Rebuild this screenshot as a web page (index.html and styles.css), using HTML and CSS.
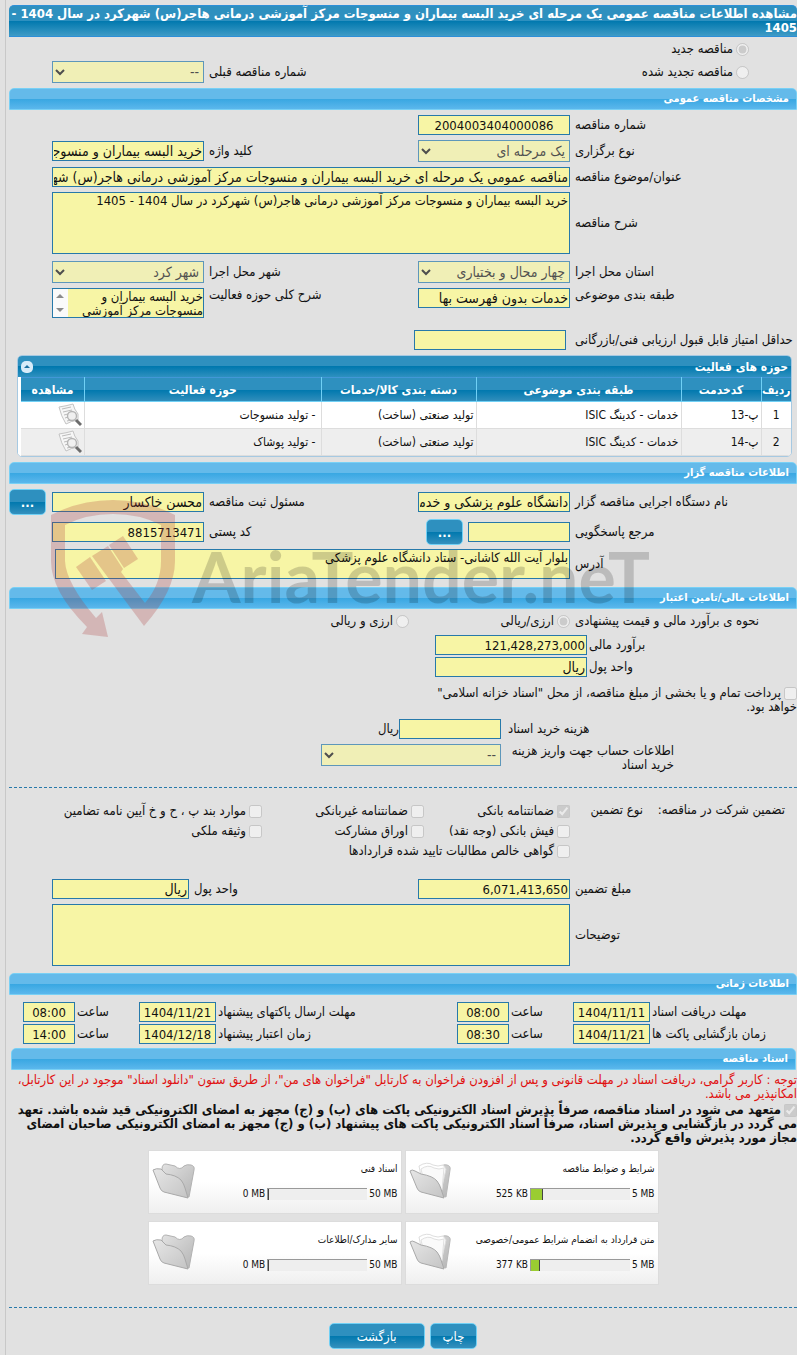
FILE: index.html
```html
<!DOCTYPE html>
<html lang="fa" dir="rtl">
<head>
<meta charset="UTF-8">
<meta name="viewport" content="width=device-width, initial-scale=1.0">
<title>مشاهده اطلاعات مناقصه عمومی</title>
<link rel="stylesheet" href="styles.css">
</head>
<body>

<!-- shared icons -->
<svg class="sprite" aria-hidden="true">
    <defs>
        <linearGradient id="folderBack" x1="0" y1="0" x2="1" y2="1">
            <stop offset="0" stop-color="#e2e2e2"/>
            <stop offset="1" stop-color="#b4b4b4"/>
        </linearGradient>
        <linearGradient id="folderFront" x1="0" y1="0" x2="1" y2="1">
            <stop offset="0" stop-color="#e6e6e6"/>
            <stop offset="1" stop-color="#c4c4c4"/>
        </linearGradient>
    </defs>
    <symbol id="folder-empty" viewBox="0 0 44 38">
        <path d="M10 7 Q10 2 14 2 L23 4 Q28 9 32 4 Q35 2 39 3 Q43 4 42 8 L37 35 L14 28 Z" fill="url(#folderBack)" stroke="#b2b2b2"/>
        <path d="M1 8 Q4 6 9 7 L14 12 Q24 13 29 18 Q32 22 33 26 L36 36 L12 30 Q9 29 8 26 Z" fill="url(#folderFront)" stroke="#a9a9a9"/>
    </symbol>
    <symbol id="folder-full" viewBox="0 0 44 38">
        <path d="M20 5 Q28 8 33 4 Q35 2 38 3 Q42 4 41 8 L37 35 L14 28 Z" fill="url(#folderBack)" stroke="#b8b8b8"/>
        <path d="M10 4 Q18 -1 24 3 Q29 5 34 3 L37 7 L32 29 L14 24 Z" fill="#fff" stroke="#dedede"/>
        <path d="M12 7 Q19 2 25 6 Q30 8 35 6 L33 28 L16 24 Z" fill="#fafafa" stroke="#e0e0e0"/>
        <path d="M1 9 Q3 7 6 9 L12 12 Q24 14 28 19 Q31 23 32 27 L35 36 L12 30 Q9 29 8 26 Z" fill="url(#folderFront)" stroke="#a9a9a9"/>
    </symbol>
    <symbol id="view" viewBox="0 0 24 24">
        <path d="M1 4 Q8 3 15 1 Q16 6 20 11 L20 17 Q13 18 8 21 Q3 13 1 4 Z" fill="#f6f6f6" stroke="#c4c4c4"/>
        <path d="M4 6 L13 4 M5 9 L14 7 M6 12 L10 11 M7 15 L10 14 M9 18 L13 17" stroke="#bbb" fill="none"/>
        <circle cx="14" cy="13" r="4.5" fill="#f0f0f0" stroke="#b4b4b4" stroke-width="1.4"/>
        <path d="M18 17 L23 22" stroke="#6c6c6c" stroke-width="3"/>
    </symbol>
</svg>

<div class="page">

    <h1 class="title">مشاهده اطلاعات مناقصه عمومی یک مرحله ای خرید البسه بیماران و منسوجات مرکز آموزشی درمانی هاجر(س) شهرکرد در سال 1404 - 1405</h1>

    <div class="kind">
        <div class="kind-line"><input type="radio" name="kind" id="kindNew" checked disabled><label for="kindNew">مناقصه جدید</label></div>
        <div class="form-row">
            <div class="kind-line"><input type="radio" name="kind" id="kindRenew" disabled><label for="kindRenew">مناقصه تجدید شده</label></div>
            <span></span>
            <label class="lbl" for="prevNo">شماره مناقصه قبلی</label>
            <select id="prevNo" disabled><option>--</option></select>
        </div>
    </div>

    <h2 class="bar">مشخصات مناقصه عمومی</h2>
    <div class="section">
        <div class="form-row">
            <label class="lbl" for="tenderNo">شماره مناقصه</label>
            <input class="num center" type="text" id="tenderNo" value="2004003404000086" readonly>
        </div>
        <div class="form-row">
            <label class="lbl" for="tenderType">نوع برگزاری</label>
            <select id="tenderType" disabled><option>یک مرحله ای</option></select>
            <label class="lbl" for="keyword">کلید واژه</label>
            <input type="text" id="keyword" value="خرید البسه بیماران و منسوجات" readonly>
        </div>
        <div class="form-row">
            <label class="lbl" for="subject">عنوان/موضوع مناقصه</label>
            <input class="wide" type="text" id="subject" value="مناقصه عمومی یک مرحله ای خرید البسه بیماران و منسوجات مرکز آموزشی درمانی هاجر(س) شهرکرد" readonly>
        </div>
        <div class="form-row after-area">
            <label class="lbl" for="desc">شرح مناقصه</label>
            <textarea class="wide tall" id="desc" readonly>خرید البسه بیماران و منسوجات مرکز آموزشی درمانی هاجر(س) شهرکرد در سال 1404 - 1405</textarea>
        </div>
        <div class="form-row">
            <label class="lbl" for="province">استان محل اجرا</label>
            <select id="province" disabled><option>چهار محال و بختیاری</option></select>
            <label class="lbl" for="city">شهر محل اجرا</label>
            <select id="city" disabled><option>شهر کرد</option></select>
        </div>
        <div class="form-row top">
            <label class="lbl" for="category">طبقه بندی موضوعی</label>
            <input type="text" id="category" value="خدمات بدون فهرست بها" readonly>
            <label class="lbl" for="scope">شرح کلی حوزه فعالیت</label>
            <div class="scroll-area">
                <textarea id="scope" readonly>خرید البسه بیماران و منسوجات مرکز آموزشی درمانی هاجر(س) شهرکرد</textarea>
                <svg viewBox="0 0 15 28" aria-hidden="true"><path d="M3 9 L7 5 L11 9 Z M3 19 L7 23 L11 19 Z" fill="#8b8b8b"/></svg>
            </div>
        </div>
        <div class="form-row score">
            <label class="lbl" for="minScore">حداقل امتیاز قابل قبول ارزیابی فنی/بازرگانی</label>
            <input type="text" id="minScore" readonly>
        </div>
        <div class="grid-box">
            <div class="grid-caption">
                <span>حوزه های فعالیت</span>
                <button class="toggle" type="button" aria-label="بستن">
                    <svg viewBox="0 0 12 12"><path d="M3 7 L6 4 L9 7 Z" fill="#1c6f9f"/></svg>
                </button>
            </div>
            <table class="grid">
                <colgroup>
                    <col class="c-row"><col class="c-code"><col class="c-subj"><col class="c-cat"><col><col class="c-view">
                </colgroup>
                <thead>
                    <tr>
                        <th>ردیف</th>
                        <th>کدخدمت</th>
                        <th>طبقه بندی موضوعی</th>
                        <th>دسته بندی کالا/خدمات</th>
                        <th>حوزه فعالیت</th>
                        <th>مشاهده</th>
                    </tr>
                </thead>
                <tbody>
                    <tr>
                        <td class="center">1</td>
                        <td>پ-13</td>
                        <td>خدمات - کدینگ ISIC</td>
                        <td>تولید صنعتی (ساخت)</td>
                        <td class="act">- تولید منسوجات</td>
                        <td><svg class="view"><use href="#view"/></svg></td>
                    </tr>
                    <tr>
                        <td class="center">2</td>
                        <td>پ-14</td>
                        <td>خدمات - کدینگ ISIC</td>
                        <td>تولید صنعتی (ساخت)</td>
                        <td class="act">- تولید پوشاک</td>
                        <td><svg class="view"><use href="#view"/></svg></td>
                    </tr>
                </tbody>
            </table>
        </div>
    </div>

    <h2 class="bar">اطلاعات مناقصه گزار</h2>
    <div class="section owner">
        <div class="form-row with-btn">
            <label class="lbl" for="org">نام دستگاه اجرایی مناقصه گزار</label>
            <input type="text" id="org" value="دانشگاه علوم پزشکی و خدمات بهداشتی" readonly>
            <label class="lbl" for="officer">مسئول ثبت مناقصه</label>
            <input type="text" id="officer" value="محسن خاکسار" readonly>
            <button class="btn dots" type="button">...</button>
        </div>
        <div class="form-row">
            <label class="lbl" for="contact">مرجع پاسخگویی</label>
            <div class="pair">
                <input type="text" id="contact" readonly>
                <button class="btn dots" type="button">...</button>
            </div>
            <label class="lbl" for="postal">کد پستی</label>
            <input class="num" type="text" id="postal" value="8815713471" readonly>
        </div>
        <div class="form-row address">
            <label class="lbl" for="address">آدرس</label>
            <textarea class="wide" id="address" readonly>بلوار آیت الله کاشانی- ستاد دانشگاه علوم پزشکی</textarea>
        </div>

        <div class="watermark">
            <svg viewBox="0 0 128 138" aria-hidden="true">
                <g fill="#ad3636" fill-opacity="0.25">
                    <path d="M1 16 Q30 1 63 1 Q96 1 125 16 L125 62 Q125 92 94 127 L42 57 L58 47 L73 70 L71 73 L95 104 Q111 85 111 62 L111 26 Q90 15 63 15 Q36 15 15 26 L15 62 Q16 84 46 119 L52 113 L58 138 L32 135 L37 128 Q1 92 1 62 Z"/>
                    <path d="M26 68 L40 58 L56 82 L42 91 Z"/>
                    <path d="M59 46 L73 37 L88 60 L74 69 Z"/>
                </g>
            </svg>
            <span>AriaTender.neT</span>
        </div>
    </div>

    <h2 class="bar">اطلاعات مالی/تامین اعتبار</h2>
    <div class="section money">
        <div class="form-row">
            <span class="lbl">نحوه ی برآورد مالی و قیمت پیشنهادی</span>
            <div class="radios wide">
                <span><input type="radio" name="currency" id="curOne" checked disabled><label for="curOne">ارزی/ریالی</label></span>
                <span><input type="radio" name="currency" id="curBoth" disabled><label for="curBoth">ارزی و ریالی</label></span>
            </div>
        </div>
        <div class="amount-row">
            <label class="lbl" for="estimate">برآورد مالی</label>
            <input class="num" type="text" id="estimate" value="121,428,273,000" readonly>
            <label class="lbl" for="unit1">واحد پول</label>
            <input type="text" id="unit1" value="ریال" readonly>
        </div>
        <div class="treasury"><input type="checkbox" id="treasury" disabled><label for="treasury">پرداخت تمام و یا بخشی از مبلغ مناقصه، از محل "اسناد خزانه اسلامی" خواهد بود.</label></div>
        <div class="fee-row">
            <label class="lbl" for="fee">هزینه خرید اسناد</label>
            <div class="fee"><input type="text" id="fee" readonly><span>ریال</span></div>
            <label class="lbl narrow" for="account">اطلاعات حساب جهت واریز هزینه خرید اسناد</label>
            <select id="account" disabled><option>--</option></select>
        </div>
        <hr>
        <div class="guarantee">
            <span class="g-title">تضمین شرکت در مناقصه:</span>
            <span class="g-type">نوع تضمین</span>
            <div class="checks">
                <span><input type="checkbox" id="g1" checked disabled><label for="g1">ضمانتنامه بانکی</label></span>
                <span><input type="checkbox" id="g2" disabled><label for="g2">ضمانتنامه غیربانکی</label></span>
                <span><input type="checkbox" id="g3" disabled><label for="g3">موارد بند پ ، ح و خ آیین نامه تضامین</label></span>
                <span><input type="checkbox" id="g4" disabled><label for="g4">فیش بانکی (وجه نقد)</label></span>
                <span><input type="checkbox" id="g5" disabled><label for="g5">اوراق مشارکت</label></span>
                <span><input type="checkbox" id="g6" disabled><label for="g6">وثیقه ملکی</label></span>
                <span class="full"><input type="checkbox" id="g7" disabled><label for="g7">گواهی خالص مطالبات تایید شده قراردادها</label></span>
            </div>
        </div>
        <div class="form-row unit">
            <label class="lbl" for="gAmount">مبلغ تضمین</label>
            <input class="num" type="text" id="gAmount" value="6,071,413,650" readonly>
            <label class="lbl" for="unit2">واحد پول</label>
            <input type="text" id="unit2" value="ریال" readonly>
        </div>
        <div class="form-row after-area">
            <label class="lbl" for="notes">توضیحات</label>
            <textarea class="wide tall" id="notes" readonly></textarea>
        </div>
    </div>

    <h2 class="bar">اطلاعات زمانی</h2>
    <div class="times">
        <label class="lbl" for="d1">مهلت دریافت اسناد</label>
        <input class="num" type="text" id="d1" value="1404/11/11" readonly>
        <label class="lbl" for="t1">ساعت</label>
        <input class="num" type="text" id="t1" value="08:00" readonly>
        <label class="lbl" for="d2">مهلت ارسال پاکتهای پیشنهاد</label>
        <input class="num" type="text" id="d2" value="1404/11/21" readonly>
        <label class="lbl" for="t2">ساعت</label>
        <input class="num" type="text" id="t2" value="08:00" readonly>
        <label class="lbl" for="d3">زمان بازگشایی پاکت ها</label>
        <input class="num" type="text" id="d3" value="1404/11/21" readonly>
        <label class="lbl" for="t3">ساعت</label>
        <input class="num" type="text" id="t3" value="08:30" readonly>
        <label class="lbl" for="d4">زمان اعتبار پیشنهاد</label>
        <input class="num" type="text" id="d4" value="1404/12/18" readonly>
        <label class="lbl" for="t4">ساعت</label>
        <input class="num" type="text" id="t4" value="14:00" readonly>
    </div>

    <h2 class="bar inset">اسناد مناقصه</h2>
    <p class="warning">توجه : کاربر گرامی، دریافت اسناد در مهلت قانونی و پس از افزودن فراخوان به کارتابل "فراخوان های من"، از طریق ستون "دانلود اسناد" موجود در این کارتابل، امکانپذیر می باشد.</p>
    <div class="commit"><input type="checkbox" id="commit" checked disabled><label for="commit">متعهد می شود در اسناد مناقصه، صرفاً پذیرش اسناد الکترونیکی پاکت های (ب) و (ج) مجهز به امضای الکترونیکی قید شده باشد. تعهد می گردد در بازگشایی و پذیرش اسناد، صرفاً اسناد الکترونیکی پاکت های پیشنهاد (ب) و (ج) مجهز به امضای الکترونیکی صاحبان امضای مجاز مورد پذیرش واقع گردد.</label></div>

    <div class="docs">
        <div class="doc">
            <div class="doc-info">
                <div>شرایط و ضوابط مناقصه</div>
                <div class="usage"><span>525 KB</span><div class="track"><div class="fill" style="width: 12%"></div></div><span>5 MB</span></div>
            </div>
            <svg class="folder"><use href="#folder-full"/></svg>
        </div>
        <div class="doc">
            <div class="doc-info">
                <div>اسناد فنی</div>
                <div class="usage"><span>0 MB</span><div class="track"><div class="fill" style="width: 0%"></div></div><span>50 MB</span></div>
            </div>
            <svg class="folder"><use href="#folder-empty"/></svg>
        </div>
        <div class="doc">
            <div class="doc-info">
                <div>متن قرارداد به انضمام شرایط عمومی/خصوصی</div>
                <div class="usage"><span>377 KB</span><div class="track"><div class="fill" style="width: 9%"></div></div><span>5 MB</span></div>
            </div>
            <svg class="folder"><use href="#folder-full"/></svg>
        </div>
        <div class="doc">
            <div class="doc-info">
                <div>سایر مدارک/اطلاعات</div>
                <div class="usage"><span>0 MB</span><div class="track"><div class="fill" style="width: 0%"></div></div><span>50 MB</span></div>
            </div>
            <svg class="folder"><use href="#folder-empty"/></svg>
        </div>
    </div>

    <hr>
    <div class="actions">
        <button class="btn" type="button">چاپ</button>
        <button class="btn back" type="button">بازگشت</button>
    </div>
</div>

</body>
</html>
```
FILE: styles.css
```css
* {
    box-sizing: border-box;
}

body {
    background-color: #e1e1e1;
    font-family: Tahoma, "DejaVu Sans Condensed", "DejaVu Sans", sans-serif;
    font-size: 13px;
    line-height: 14px;
    color: #111;
    margin: 0;
    padding: 0 0 0 5px;
}

.sprite {
    position: absolute;
    width: 0;
    height: 0;
}

.page {
    min-height: 100vh;
    border-left: 1px solid #c8c8c8;
    padding: 5px 0 5px 3px;
}

h1, h2, p {
    margin: 0;
}

.title {
    background: linear-gradient(#2e90bf 50%, #0078ae 50%, #3f9bc6);
    border: 1px solid #2d8fd8;
    border-left: 0;
    border-right: 0;
    border-radius: 5px 5px 0 0;
    color: #fff;
    font-size: 13px;
    line-height: 14px;
    padding: 1px 0;
}

.bar {
    height: 22px;
    background: linear-gradient(#64baea 50%, #38a7e2 50%, #5bb7ec);
    border: 1px solid #78d0f5;
    border-radius: 5px 5px 0 0;
    color: #fff;
    font-size: 11px;
    line-height: 20px;
    padding: 0 7px;
}

.bar.inset {
    margin: 4px 1px 0 2px;
}

/* form controls */
input, select, textarea, button {
    font-family: inherit;
    margin: 0;
}

input[type="text"], textarea, select {
    width: 100%;
    min-width: 0;
    background-color: #f7f5a5;
    border: 1px solid #2779aa;
    border-radius: 0;
    color: #111;
    font-size: 14px;
}

input[type="text"] {
    height: 20px;
    padding: 0 1px;
}

input[type="text"].num {
    font-size: 13px;
}

select {
    height: 22px;
}

textarea {
    display: block;
    height: 30px;
    padding: 1px;
    line-height: 14px;
    resize: none;
    overflow: hidden;
}

textarea, .scroll-area textarea {
    font-size: 13px;
}

textarea.tall {
    height: 62px;
}

.scroll-area {
    display: flex;
    background: #fafafa;
    border: 1px solid #2779aa;
}

.scroll-area textarea {
    flex: 1;
    height: 28px;
    border: 0;
    padding: 1px 0;
}

.scroll-area svg {
    width: 15px;
    height: 28px;
}

input[type="radio"], input[type="checkbox"] {
    width: 13px;
    height: 13px;
    vertical-align: middle;
}

input[type="radio"] + label, input[type="checkbox"] + label {
    margin-right: 3px;
}

.center, .grid .center {
    text-align: center;
}

.lbl {
    text-align: left;
}

.section {
    position: relative;
    display: flex;
    flex-direction: column;
    gap: 5px;
    padding: 5px 0;
}

.form-row {
    display: grid;
    grid-template-columns: minmax(0, 1fr) 152px 204px 152px;
    column-gap: 5px;
    align-items: center;
    padding-left: 43px;
}

.form-row.top {
    align-items: start;
}

.form-row .wide {
    grid-column: 2 / 5;
}

.after-area {
    margin-bottom: 2px;
}

.kind {
    padding: 5px 0;
}

.kind-line {
    padding: 0 48px 5px 0;
}

.kind .form-row .kind-line {
    padding-bottom: 0;
}

.kind .form-row {
    white-space: nowrap;
}

.score {
    grid-template-columns: minmax(0, 1fr) 152px 192px 152px;
    column-gap: 9px;
    margin-top: 7px;
}

/* activity table */
.grid-box {
    margin: 0 5px 0 8px;
    border: 1px solid #a6c9e2;
    border-radius: 5px;
    background: #fff;
    overflow: hidden;
}

.grid-caption {
    display: flex;
    justify-content: space-between;
    align-items: center;
    height: 21px;
    padding: 0 3px;
    background: linear-gradient(#2e90bf 50%, #0078ae 50%, #2e90bf);
    color: #fff;
    font-size: 12px;
    font-weight: bold;
}

.toggle {
    width: 12px;
    height: 12px;
    padding: 0;
    border: 0;
    border-radius: 5px;
    background: #d7ebf9;
    line-height: 0;
    cursor: pointer;
}

.grid {
    width: 100%;
    table-layout: fixed;
    border-collapse: collapse;
    border-left: 3px solid #fff;
}

.c-row { width: 30px; }
.c-code { width: 80px; }
.c-subj { width: 205px; }
.c-cat { width: 155px; }
.c-view { width: 65px; }

.grid thead tr {
    background: linear-gradient(#2e90bf 50%, #0078ae 50%, #3590bd);
}

.grid th {
    height: 24px;
    padding: 0;
    color: #fff;
    font-size: 12px;
    border-top: 1px solid #4297d7;
    border-left: 1px solid #70d0f5;
    border-bottom: 1px solid #70d0f5;
}

.grid td {
    height: 27px;
    padding: 0 2px;
    font-size: 12px;
    border-left: 1px solid #ddd;
    border-bottom: 1px solid #ddd;
}

.grid .act {
    padding-right: 5px;
}

.grid tbody tr:nth-child(2) {
    background: #eee;
}

.view {
    display: block;
    width: 24px;
    height: 24px;
}

/* buttons */
.btn {
    height: 26px;
    padding: 0 12px;
    background: linear-gradient(#2e90bf 50%, #0078ae 50%, #3590bd);
    border: 1px solid #70d0f5;
    border-radius: 5px;
    color: #fff;
    font-size: 13px;
    cursor: pointer;
}

.btn:hover {
    background: #0078ae;
}

.btn.dots {
    width: 37px;
    flex: none;
    padding: 0;
    font-weight: bold;
}

.btn.back {
    padding: 0 27px;
}

/* tender owner */
.owner {
    gap: 4px;
    padding-bottom: 8px;
}

.with-btn {
    grid-template-columns: minmax(0, 1fr) 152px 204px 152px 38px;
    padding-left: 0;
}

.with-btn .dots {
    margin-right: auto;
}

.pair {
    display: flex;
    align-items: center;
    gap: 5px;
}

.pair input[type="text"] {
    width: 102px;
}

.address {
    padding-left: 46px;
    grid-template-columns: minmax(0, 1fr) 152px 204px 149px;
}

.watermark {
    position: absolute;
    left: 41px;
    top: 15px;
    display: flex;
    direction: ltr;
    gap: 14px;
    height: 138px;
    pointer-events: none;
}

.watermark svg {
    width: 128px;
    height: 138px;
}

.watermark span {
    font-family: Lato, "Liberation Sans", sans-serif;
    font-size: 70px;
    line-height: 154px;
    font-weight: bold;
    color: rgba(0, 0, 0, 0.17);
}

/* money */
.radios {
    display: grid;
    grid-template-columns: 161px 1fr;
}

.amount-row {
    display: grid;
    grid-template-columns: minmax(0, 1fr) 152px;
    gap: 2px;
    align-items: center;
    margin-top: 2px;
    padding-left: 426px;
}

.treasury {
    width: 368px;
    margin-top: 4px;
}

.fee-row {
    display: grid;
    grid-template-columns: minmax(0, 1fr) 180px;
    gap: 5px 7px;
    align-items: center;
    padding-left: 312px;
}

.fee {
    display: flex;
    align-items: center;
}

.fee input[type="text"] {
    width: 102px;
}

.fee-row select {
    align-self: start;
}

.fee-row .narrow {
    width: 166px;
    margin-right: auto;
    text-align: right;
}

hr {
    width: 100%;
    margin: 10px 0;
    border: 0;
    border-top: 1px dashed #2779aa;
}

.guarantee {
    display: flex;
    padding-right: 12px;
    margin-bottom: 15px;
}

.g-title {
    width: 142px;
}

.g-type {
    width: 73px;
}

.checks {
    flex: 1;
    display: grid;
    grid-template-columns: 146px 162px 1fr;
    row-gap: 4px;
    line-height: 16px;
}

.checks .full {
    grid-column: 1 / 4;
}

.unit {
    grid-template-columns: minmax(0, 1fr) 152px 219px 137px;
}

.times {
    display: grid;
    grid-template-columns: minmax(0, 1fr) 77px 60px 52px 237px 77px 60px 52px;
    gap: 2px;
    align-items: center;
    padding: 7px 0 0 14px;
}

.times input[type="text"] {
    text-align: center;
}

/* documents */
.warning {
    color: #e01010;
    padding-top: 3px;
}

.commit {
    font-weight: bold;
    padding-top: 2px;
}

.docs {
    display: grid;
    grid-template-columns: 254px 254px;
    gap: 7px 3px;
    justify-content: center;
    margin: 5px 0 22px;
}

.doc {
    display: flex;
    justify-content: space-between;
    height: 64px;
    padding: 11px 3px;
    background: linear-gradient(#fff 50%, #efefef);
    border: 1px solid #dcdcdc;
    font-size: 10px;
}

.doc-info {
    display: flex;
    flex-direction: column;
    gap: 11px;
    white-space: nowrap;
}

.usage {
    display: flex;
    align-items: center;
    gap: 2px;
    direction: ltr;
    width: 160px;
    justify-content: flex-end;
}

.track {
    width: 100px;
    height: 12px;
    background: #eee;
    border-top: 1px solid #999;
    border-left: 1px solid #999;
}

.fill {
    height: 100%;
    background: #9acd32;
    border-right: 1px solid #444;
}

.folder {
    width: 44px;
    height: 38px;
    flex: none;
}

.actions {
    display: flex;
    justify-content: center;
    gap: 5px;
    margin-top: 15px;
}
```
